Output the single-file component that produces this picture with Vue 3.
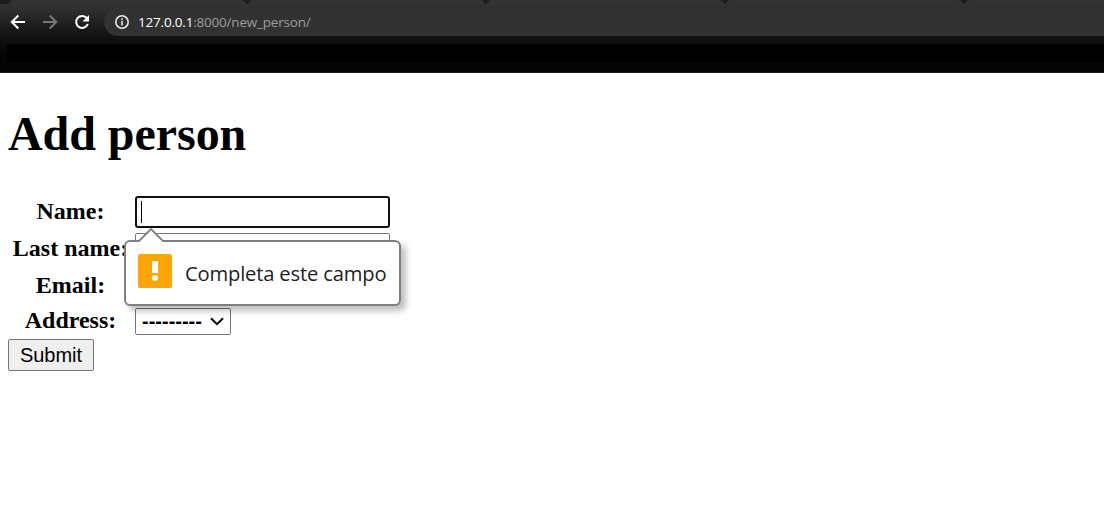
<script setup>
const tabs = [1, 2, 3, 4]
const options = ['---------']
</script>

<template>
  <div class="window">
    <header class="chrome">
      <div class="tabs">
        <svg class="first-edge" viewBox="0 0 14 4"><path d="M0 0H14C11 0 9.500 2 9 4H0Z" /></svg>
        <svg v-for="tab in tabs" :key="tab" class="tab-edge" viewBox="0 0 12 4">
          <path d="M0 0C3 0 4.500 2 5 4H7C7.500 2 9 0 12 0Z" />
        </svg>
      </div>
      <div class="toolbar">
        <svg class="nav" viewBox="0 0 16 16"><path d="M15 8H2M8.300 1.500 1.800 8l6.500 6.500" /></svg>
        <svg class="nav forward" viewBox="0 0 16 16"><path d="M1 8h13M7.700 1.500 14.200 8l-6.500 6.500" /></svg>
        <svg class="nav" viewBox="0 0 16 16">
          <path d="M12.900 4.200A6 6 0 1 0 13.800 10" />
          <path class="solid" d="M15 1v6.500H8.500Z" />
        </svg>
        <div class="address">
          <svg class="info" viewBox="0 0 14 14">
            <circle cx="7" cy="7" r="6.200" />
            <path d="M7 6v4.500M7 3.300v1.600" />
          </svg>
          <span class="url"><b>127.0.0.1</b>:8000/new_person/</span>
        </div>
      </div>
      <div class="bookmarks"></div>
    </header>

    <main>
      <h1>Add person</h1>
      <form @submit.prevent>
        <div class="fields">
          <label>Name:</label>
          <div class="field focused">
            <span class="caret"></span>
            <div class="bubble" role="alert">
              <svg class="pointer" viewBox="0 0 26 14">
                <path class="fill" d="M0 14 13 1l13 13Z" />
                <path class="line" d="M0 13h1L13 1l12 12h1" />
              </svg>
              <svg class="warning" viewBox="0 0 34 34">
                <rect width="34" height="34" rx="2" fill="#ffa400" />
                <path d="M14 7h6v12h-6Z" fill="#fff" />
                <circle cx="17" cy="24" r="3" fill="#fff" />
              </svg>
              <span class="message">Completa este campo</span>
            </div>
          </div>
          <label>Last name:</label>
          <div class="field"></div>
          <label>Email:</label>
          <div class="field"></div>
          <label class="short">Address:</label>
          <div class="select">
            <span>{{ options[0] }}</span>
            <svg viewBox="0 0 14 9"><path d="M1 1.200 7 7.200l6-6" /></svg>
          </div>
        </div>
        <button type="submit">Submit</button>
      </form>
    </main>
  </div>
</template>

<style>
body {
  margin: 0;
  background: #fff;
}
</style>

<style scoped>
.window {
  height: 518px;
  overflow: hidden;
  background: #fff;
  color: #000;
  font-family: "Liberation Serif", "Times New Roman", serif;
}
.chrome {
  box-sizing: border-box;
  height: 73px;
  background: linear-gradient(#333 0, #303030 8px, #111 38px, #050505 56px, #030303 72px);
  border-bottom: 1px solid #1b1b1b;
}
.tabs {
  display: flex;
  gap: 227px;
  height: 4px;
}
.first-edge {
  flex: none;
  width: 14px;
  height: 4px;
  fill: #1d1d1d;
}
.tab-edge {
  flex: none;
  width: 12px;
  height: 4px;
  fill: #1d1d1d;
}
.toolbar {
  display: flex;
  align-items: center;
  height: 28px;
  padding: 4px 0 0 10px;
}
.nav {
  flex: none;
  width: 16px;
  height: 16px;
  margin-right: 16px;
  fill: none;
  stroke: #fff;
  stroke-width: 2;
}
.forward {
  stroke: #777;
}
.nav .solid {
  fill: #fff;
  stroke: none;
}
.address {
  display: flex;
  flex: 1;
  align-items: center;
  height: 28px;
  margin-left: -2px;
  padding-left: 11px;
  border-radius: 14px 0 0 14px;
  background: #323232;
}
.info {
  width: 14px;
  height: 14px;
  fill: none;
  stroke: #eee;
  stroke-width: 1.5;
}
.url {
  margin-left: 9px;
  color: #9c9c9c;
  font: 13.5px/28px "Open Sans", sans-serif;
  letter-spacing: -0.2px;
  white-space: nowrap;
}
.url b {
  color: #fff;
  font-weight: 400;
}
.bookmarks {
  height: 18px;
  margin: 8px 0 0 7px;
  background: #000;
}
main {
  padding: 0 8px;
}
h1 {
  margin: 33px 0 35px;
  font-size: 48px;
  line-height: 55px;
  letter-spacing: -0.05px;
}
.fields {
  display: grid;
  grid-template-columns: 121px 255px;
  grid-template-rows: 32px 32px 33px 27px;
  column-gap: 4px;
  row-gap: 5px;
  margin-left: 2px;
}
label {
  font-size: 24px;
  font-weight: 700;
  line-height: 31px;
  text-align: center;
  white-space: nowrap;
}
.short {
  line-height: 25px;
}
.field {
  box-sizing: border-box;
  height: 32px;
  border: 1px solid #767676;
  border-radius: 2px;
  background: #fff;
}
.focused {
  position: relative;
  border: 2px solid #101010;
  border-radius: 3px;
}
.caret {
  display: block;
  width: 1px;
  height: 22px;
  margin: 3px 0 0 4px;
  background: #000;
}
.bubble {
  position: absolute;
  z-index: 2;
  top: 42px;
  left: -13px;
  display: flex;
  align-items: center;
  box-sizing: border-box;
  width: 277px;
  height: 66px;
  padding: 0 0 4px 12px;
  border: 2px solid #808080;
  border-radius: 6px;
  background: #fff;
  box-shadow: 5px 5px 6px rgba(0, 0, 0, 0.25);
}
.pointer {
  position: absolute;
  top: -14px;
  left: 12px;
  width: 26px;
  height: 14px;
}
.pointer .fill {
  fill: #fff;
}
.pointer .line {
  fill: none;
  stroke: #808080;
  stroke-width: 1.8;
}
.warning {
  flex: none;
  width: 34px;
  height: 34px;
}
.message {
  margin: 3px 0 0 13px;
  color: #222;
  font: 20.2px/28px "Open Sans", sans-serif;
  letter-spacing: -0.18px;
  white-space: nowrap;
}
.select {
  display: flex;
  align-items: center;
  justify-content: space-between;
  box-sizing: border-box;
  width: 96px;
  height: 27px;
  padding: 0 6px;
  border: 1px solid #767676;
  border-radius: 2px;
  background: #fff;
  font: 700 20px/25px "Liberation Sans", Arial, sans-serif;
}
.select svg {
  width: 14px;
  height: 9px;
  fill: none;
  stroke: #000;
  stroke-width: 2;
}
button {
  display: block;
  box-sizing: border-box;
  width: 86px;
  height: 32px;
  margin-top: 4px;
  padding: 0;
  border: 1px solid #767676;
  border-radius: 2px;
  background: #efefef;
  color: #000;
  font: 20px/30px "Liberation Sans", Arial, sans-serif;
}
</style>
